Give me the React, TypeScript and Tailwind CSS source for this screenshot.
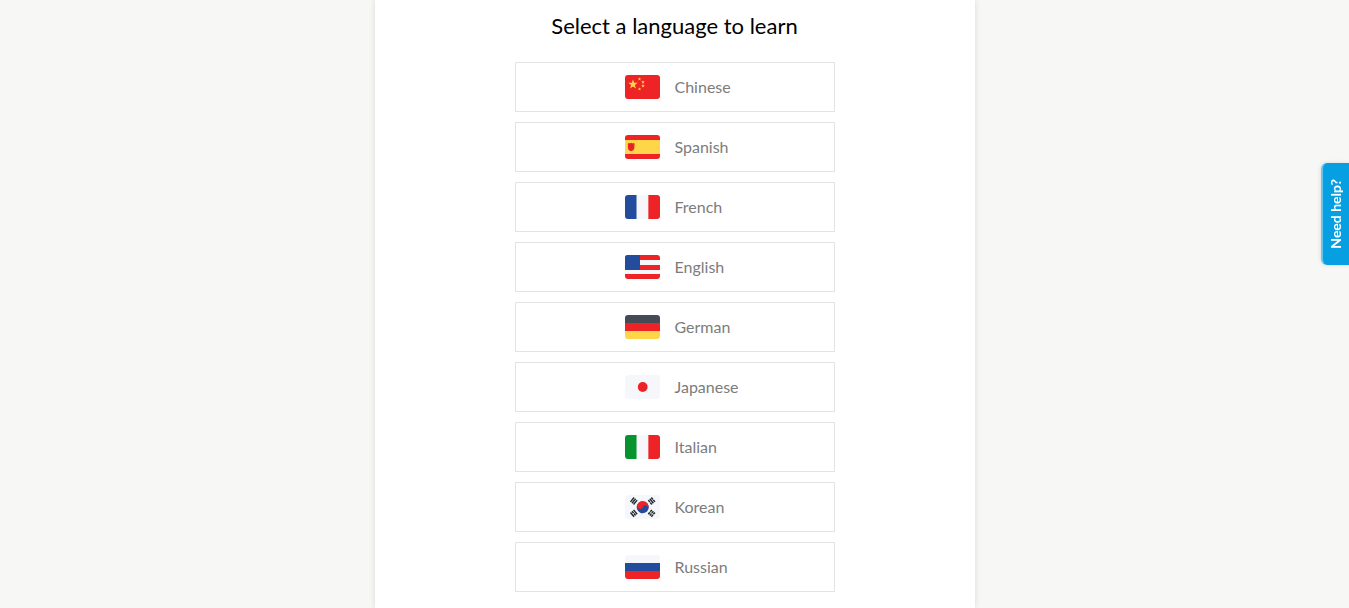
import type { ReactNode } from "react";

const RED = "#ee2326";
const BLUE = "#234c9c";
const WHITE = "#f5f7fb";
const YELLOW = "#ffd54a";

const STAR = "0,-1 .24,-.32 .95,-.31 .38,.12 .59,.81 0,.4 -.59,.81 -.38,.12 -.95,-.31 -.24,-.32";

const Flag = ({ id, children }: { id: string; children: ReactNode }) => (
  <svg aria-hidden="true" className="h-6 w-[35px] shrink-0" viewBox="0 0 35 24">
    <clipPath id={`flag-${id}`}>
      <rect width="35" height="24" rx="3" />
    </clipPath>
    <g clipPath={`url(#flag-${id})`}>{children}</g>
  </svg>
);

const Tricolor = ({ colors, vertical }: { colors: string[]; vertical?: boolean }) => (
  <>
    {colors.map((color, index) =>
      vertical ? (
        <rect fill={color} height="24" key={color} width="11.8" x={index * 11.67} />
      ) : (
        <rect fill={color} height="8.1" key={color} width="35" y={index * 8} />
      )
    )}
  </>
);

// The three bars in each corner of the Korean flag; true means a broken bar
const Trigram = ({ x, y, angle, bars }: { x: number; y: number; angle: number; bars: boolean[] }) => (
  <g stroke="#262b33" strokeWidth="1.5" transform={`translate(${x} ${y}) rotate(${angle})`}>
    {bars.map((broken, index) => (
      <path
        d={broken ? "M-2.8 0H-.3M.3 0H2.8" : "M-2.8 0H2.8"}
        key={index}
        transform={`translate(0 ${(index - 1) * 2})`}
      />
    ))}
  </g>
);

const languages: { name: string; flag: ReactNode }[] = [
  {
    name: "Chinese",
    flag: (
      <>
        <rect fill={RED} height="24" width="35" />
        <g fill={YELLOW}>
          <polygon points={STAR} transform="translate(8 9.4) scale(5)" />
          <polygon points={STAR} transform="translate(14.5 4) scale(1.8)" />
          <polygon points={STAR} transform="translate(18 7.2) scale(1.9)" />
          <polygon points={STAR} transform="translate(18 10.9) scale(1.9)" />
          <polygon points={STAR} transform="translate(14.5 14) scale(1.8)" />
        </g>
      </>
    )
  },
  {
    name: "Spanish",
    flag: (
      <>
        <rect fill={RED} height="24" width="35" />
        <rect fill={YELLOW} height="14" width="35" y="5" />
        <path d="M2.800 8.500l1.300-.6 1 .6 1-.9 1 .9 1-.6 1.400.6-.2 4.900c-.3 1.500-1.700 2.200-3.200 2.800-1.500-.6-2.900-1.300-3.100-2.800z" fill={RED} />
        <path d="M4.300 11.200h4M6.200 9.500v4.500" stroke="#c8202b" strokeWidth=".5" />
      </>
    )
  },
  { name: "French", flag: <Tricolor colors={[BLUE, WHITE, RED]} vertical /> },
  {
    name: "English",
    flag: (
      <>
        <rect fill={WHITE} height="24" width="35" />
        <path d="M0 0h35v5H0zM0 10h35v5H0zM0 19h35v5H0z" fill={RED} />
        <rect fill={BLUE} height="15" width="15" />
      </>
    )
  },
  { name: "German", flag: <Tricolor colors={["#444b56", RED, YELLOW]} /> },
  {
    name: "Japanese",
    flag: (
      <>
        <rect fill={WHITE} height="24" width="35" />
        <circle cx="17.700" cy="12" fill={RED} r="4.900" />
      </>
    )
  },
  { name: "Italian", flag: <Tricolor colors={["#07932e", WHITE, RED]} vertical /> },
  {
    name: "Korean",
    flag: (
      <>
        <rect fill={WHITE} height="24" width="35" />
        <g transform="rotate(25 17.700 12.200)">
          <circle cx="17.700" cy="12.200" fill={BLUE} r="6" />
          <path
            d="M11.700 12.200a6 6 0 0 1 12 0a3 3 0 0 0-6 0a3 3 0 0 1-6 0z"
            fill={RED}
          />
        </g>
        <Trigram angle={-50} bars={[false, false, false]} x={8.8} y={6} />
        <Trigram angle={50} bars={[true, false, true]} x={26.6} y={6} />
        <Trigram angle={50} bars={[false, true, false]} x={8.8} y={18.3} />
        <Trigram angle={-50} bars={[true, true, true]} x={26.6} y={18.3} />
      </>
    )
  },
  { name: "Russian", flag: <Tricolor colors={[WHITE, BLUE, RED]} /> }
];

const LanguageButton = ({ name, flag }: { name: string; flag: ReactNode }) => (
  <button
    className="flex h-[50px] w-full cursor-pointer items-center gap-[15px] border border-[#e3e3e3] bg-white pl-[109px] text-base text-[#7c7c7c] hover:bg-gray-50"
    type="button"
  >
    <Flag id={name}>{flag}</Flag>
    {name}
  </button>
);

export default function App() {
  return (
    <div className="min-h-screen bg-[#f7f7f5] font-['Lato',sans-serif]">
      <main className="mx-auto min-h-screen max-w-[600px] bg-white px-4 pt-3 pb-4 shadow-[0_0_6px_rgba(0,0,0,0.12)]">
        <h1 className="text-center text-[22px] leading-7 text-black">Select a language to learn</h1>
        <ul className="mx-auto mt-[22px] flex max-w-80 flex-col gap-[10px]">
          {languages.map((language) => (
            <li key={language.name}>
              <LanguageButton flag={language.flag} name={language.name} />
            </li>
          ))}
        </ul>
      </main>
      <button
        className="fixed top-[163px] right-0 flex h-[102px] w-7 cursor-pointer items-center justify-center rounded-l-md border-l-2 border-[#65c5ee] bg-[#06a0e2] text-sm font-bold text-white shadow-[0_0_4px_rgba(0,0,0,0.15)]"
        type="button"
      >
        <span className="rotate-180 [writing-mode:vertical-rl]">Need help?</span>
      </button>
    </div>
  );
}
